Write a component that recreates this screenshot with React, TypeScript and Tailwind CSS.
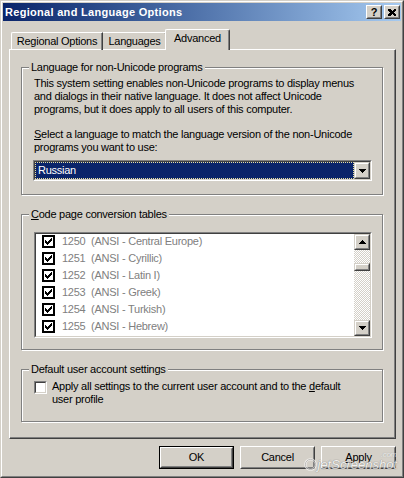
import React from "react";

const FONT = "font-['Liberation_Sans',Arial,sans-serif]";

function Raised({ className = "", inner = "", children }: { className?: string; inner?: string; children?: React.ReactNode }) {
  return (
    <div className={`flex border border-t-white border-l-white border-r-[#404040] border-b-[#404040] bg-[#d4d0c8] ${className}`}>
      <div className={`flex flex-1 border border-t-[#d4d0c8] border-l-[#d4d0c8] border-r-[#808080] border-b-[#808080] items-center justify-center ${inner}`}>
        {children}
      </div>
    </div>
  );
}

function ScrollRaised({ className = "", children }: { className?: string; children?: React.ReactNode }) {
  return (
    <div className={`flex border border-t-[#d4d0c8] border-l-[#d4d0c8] border-r-[#404040] border-b-[#404040] bg-[#d4d0c8] ${className}`}>
      <div className="flex flex-1 border border-t-white border-l-white border-r-[#808080] border-b-[#808080] items-center justify-center">
        {children}
      </div>
    </div>
  );
}

function Sunken({ className = "", inner = "", children }: { className?: string; inner?: string; children?: React.ReactNode }) {
  return (
    <div className={`flex border border-t-[#808080] border-l-[#808080] border-r-white border-b-white ${className}`}>
      <div className={`flex flex-1 min-w-0 border border-t-[#404040] border-l-[#404040] border-r-[#d4d0c8] border-b-[#d4d0c8] ${inner}`}>
        {children}
      </div>
    </div>
  );
}

function Arrow({ up = false }: { up?: boolean }) {
  return (
    <svg width="7" height="4" viewBox="0 0 7 4" shapeRendering="crispEdges">
      {up ? <path d="M3.5 0 L7 4 L0 4 Z" fill="#000" /> : <path d="M0 0 L7 0 L3.5 4 Z" fill="#000" />}
    </svg>
  );
}

function Group({ label, className = "", children }: { label: React.ReactNode; className?: string; children?: React.ReactNode }) {
  return (
    <div className={`relative border border-[#808080] shadow-[1px_1px_0_#ffffff,inset_1px_1px_0_#ffffff] ${className}`}>
      <div className="absolute -top-[7px] left-[7px] px-[2px] bg-[#d4d0c8] leading-[13px] whitespace-nowrap">{label}</div>
      {children}
    </div>
  );
}

function Check() {
  return (
    <svg width="7" height="7" viewBox="0 0 7 7" shapeRendering="crispEdges">
      <path d="M0 2h1v1h1v1h1v-1h1v-1h1v-1h1v-1h1v3h-1v1h-1v1h-1v1h-1v1h-1v-1h-1v-1h-1z" fill="#000" />
    </svg>
  );
}

const rows = [
  "1250  (ANSI - Central Europe)",
  "1251  (ANSI - Cyrillic)",
  "1252  (ANSI - Latin I)",
  "1253  (ANSI - Greek)",
  "1254  (ANSI - Turkish)",
  "1255  (ANSI - Hebrew)",
];

export default function App() {
  return (
    <div className={`w-[404px] h-[478px] ${FONT} text-[11px] tracking-[-0.25px] text-black select-none`}>
      <div className="w-full h-full flex border border-t-[#d4d0c8] border-l-[#d4d0c8] border-r-[#404040] border-b-[#404040]">
        <div className="flex flex-1 border border-t-white border-l-white border-r-[#808080] border-b-[#808080]">
          <div className="relative flex flex-col flex-1 p-[1px] bg-[#d4d0c8]">
            {/* Title bar */}
            <div className="h-[18px] flex items-center pl-[2px] pr-[1px] bg-linear-to-r from-[#0a246a] to-[#a6caf0]">
              <div className="flex-1 text-white font-bold text-[11px] tracking-[0.3px] leading-[13px] whitespace-nowrap">Regional and Language Options</div>
              <div className="flex gap-[2px]">
                <Raised className="w-[16px] h-[14px]">
                  <span className="font-bold text-[11px] leading-[10px] text-black tracking-normal">?</span>
                </Raised>
                <Raised className="w-[16px] h-[14px]">
                  <svg width="8" height="7" viewBox="0 0 8 7" shapeRendering="crispEdges">
                    <path d="M0 0h2l2 2 2-2h2v1l-2 2.5 2 2.5v1h-2l-2-2-2 2h-2v-1l2-2.5-2-2.5z" fill="#000" />
                  </svg>
                </Raised>
              </div>
            </div>

            {/* Tabs */}
            <div className="flex items-end ml-[8px] mt-[7px] h-[21px] relative z-10">
              <div className="w-[92px] h-[18px] border-l border-t border-white rounded-tl-[2px] border-r border-r-[#404040] shadow-[inset_-1px_0_0_#808080] flex items-center justify-center leading-[13px] -mb-[1px]">
                Regional Options
              </div>
              <div className="w-[64px] h-[18px] border-t border-white border-r border-r-[#404040] rounded-tr-[2px] shadow-[inset_-1px_0_0_#808080] flex items-center justify-center leading-[13px] -mb-[1px]">
                Languages
              </div>
              <div className="w-[65px] -ml-[2px] h-[21px] bg-[#d4d0c8] border-l border-t border-white rounded-tl-[2px] border-r border-r-[#404040] rounded-tr-[2px] shadow-[inset_-1px_0_0_#808080] flex items-start pt-[2px] justify-center leading-[13px] -mb-[1px]">
                Advanced
              </div>
            </div>

            {/* Panel */}
            <div className="ml-[6px] w-[387px] h-[390px] border border-t-white border-l-white border-r-[#404040] border-b-[#404040] shadow-[inset_-1px_-1px_0_#808080] flex flex-col pl-[11px]">
              <Group label="Language for non-Unicode programs" className="mt-[17px] w-[362px] h-[128px] pl-[12px] pt-[9px]">
                <div className="leading-[13px] whitespace-nowrap">
                  This system setting enables non-Unicode programs to display menus
                  <br />
                  and dialogs in their native language. It does not affect Unicode
                  <br />
                  programs, but it does apply to all users of this computer.
                </div>
                <div className="leading-[13px] whitespace-nowrap mt-[12px]">
                  <span className="underline underline-offset-[1px]">S</span>elect a language to match the language version of the non-Unicode
                  <br />
                  programs you want to use:
                </div>
                <Sunken className="mt-[6px] -ml-[1px] w-[339px] h-[21px]" inner="bg-white">
                  <div className="flex-1 bg-[#0a246a] border border-dotted border-[#e8e0a0] text-white leading-[13px] pl-[2px] flex items-center">
                    Russian
                  </div>
                  <ScrollRaised className="w-[16px]">
                    <Arrow />
                  </ScrollRaised>
                </Sunken>
              </Group>

              <Group
                label={
                  <span>
                    <span className="underline underline-offset-[1px]">C</span>ode page conversion tables
                  </span>
                }
                className="mt-[19px] w-[362px] h-[136px] pl-[12px] pt-[17px]"
              >
                <Sunken className="w-[338px] h-[106px]" inner="bg-white">
                  <div className="flex-1 flex flex-col -mt-[1px]">
                    {rows.map((r) => (
                      <div key={r} className="h-[17px] flex items-center pl-[6px]">
                        <div className="w-[13px] h-[13px] border-2 border-black bg-white flex items-center justify-center">
                          <Check />
                        </div>
                        <span className="ml-[7px] text-[#808080] whitespace-pre leading-[13px]">{r}</span>
                      </div>
                    ))}
                  </div>
                  <div className="w-[16px] flex flex-col bg-[image:repeating-conic-gradient(#d4d0c8_0%_25%,#ffffff_0%_50%)] bg-[length:2px_2px]">
                    <ScrollRaised className="h-[16px]">
                      <Arrow up />
                    </ScrollRaised>
                    <div className="h-[13px]" />
                    <ScrollRaised className="h-[8px]" />
                    <div className="flex-1" />
                    <ScrollRaised className="h-[16px]">
                      <Arrow />
                    </ScrollRaised>
                  </div>
                </Sunken>
              </Group>

              <Group label="Default user account settings" className="mt-[19px] w-[362px] h-[53px] pl-[12px] pt-[11px]">
                <div className="flex items-start">
                  <Sunken className="w-[13px] h-[13px] shrink-0" inner="bg-white" />
                  <div className="ml-[5px] -mt-[1px] leading-[13px] whitespace-nowrap">
                    Apply all settings to the current user account and to the{" "}
                    <span className="underline underline-offset-[1px]">d</span>efault
                    <br />
                    user profile
                  </div>
                </div>
              </Group>
            </div>

            {/* Buttons */}
            <div className="flex justify-end gap-[6px] mt-[7px] pr-[5px]">
              <div className="w-[75px] h-[23px] border border-black flex">
                <Raised className="flex-1">OK</Raised>
              </div>
              <Raised className="w-[75px] h-[23px]">Cancel</Raised>
              <Raised className="w-[75px] h-[23px]">
                <span>
                  <span className="underline underline-offset-[1px]">A</span>pply
                </span>
              </Raised>
            </div>

            {/* watermark overlay */}
            <div className="absolute right-[5px] bottom-[4px] flex items-end opacity-70 pointer-events-none">
              <svg width="13" height="13" viewBox="0 0 14 14" className="mb-[1px] mr-[1px]">
                <circle cx="7" cy="7" r="5.5" fill="none" stroke="#ffffff" strokeWidth="2.5" />
                <circle cx="7" cy="7" r="5.5" fill="none" stroke="#9a9a9a" strokeWidth="0.8" />
              </svg>
              <span className="italic text-[13px] leading-[15px] text-white [text-shadow:0_0_1px_#777,0_0_1px_#777] tracking-[0px]">jetScreenshot</span>
              <span className="absolute right-[0px] -top-[7px] italic text-[8px] leading-[9px] text-white [text-shadow:0_0_1px_#777]">.com</span>
            </div>
          </div>
        </div>
      </div>
    </div>
  );
}
